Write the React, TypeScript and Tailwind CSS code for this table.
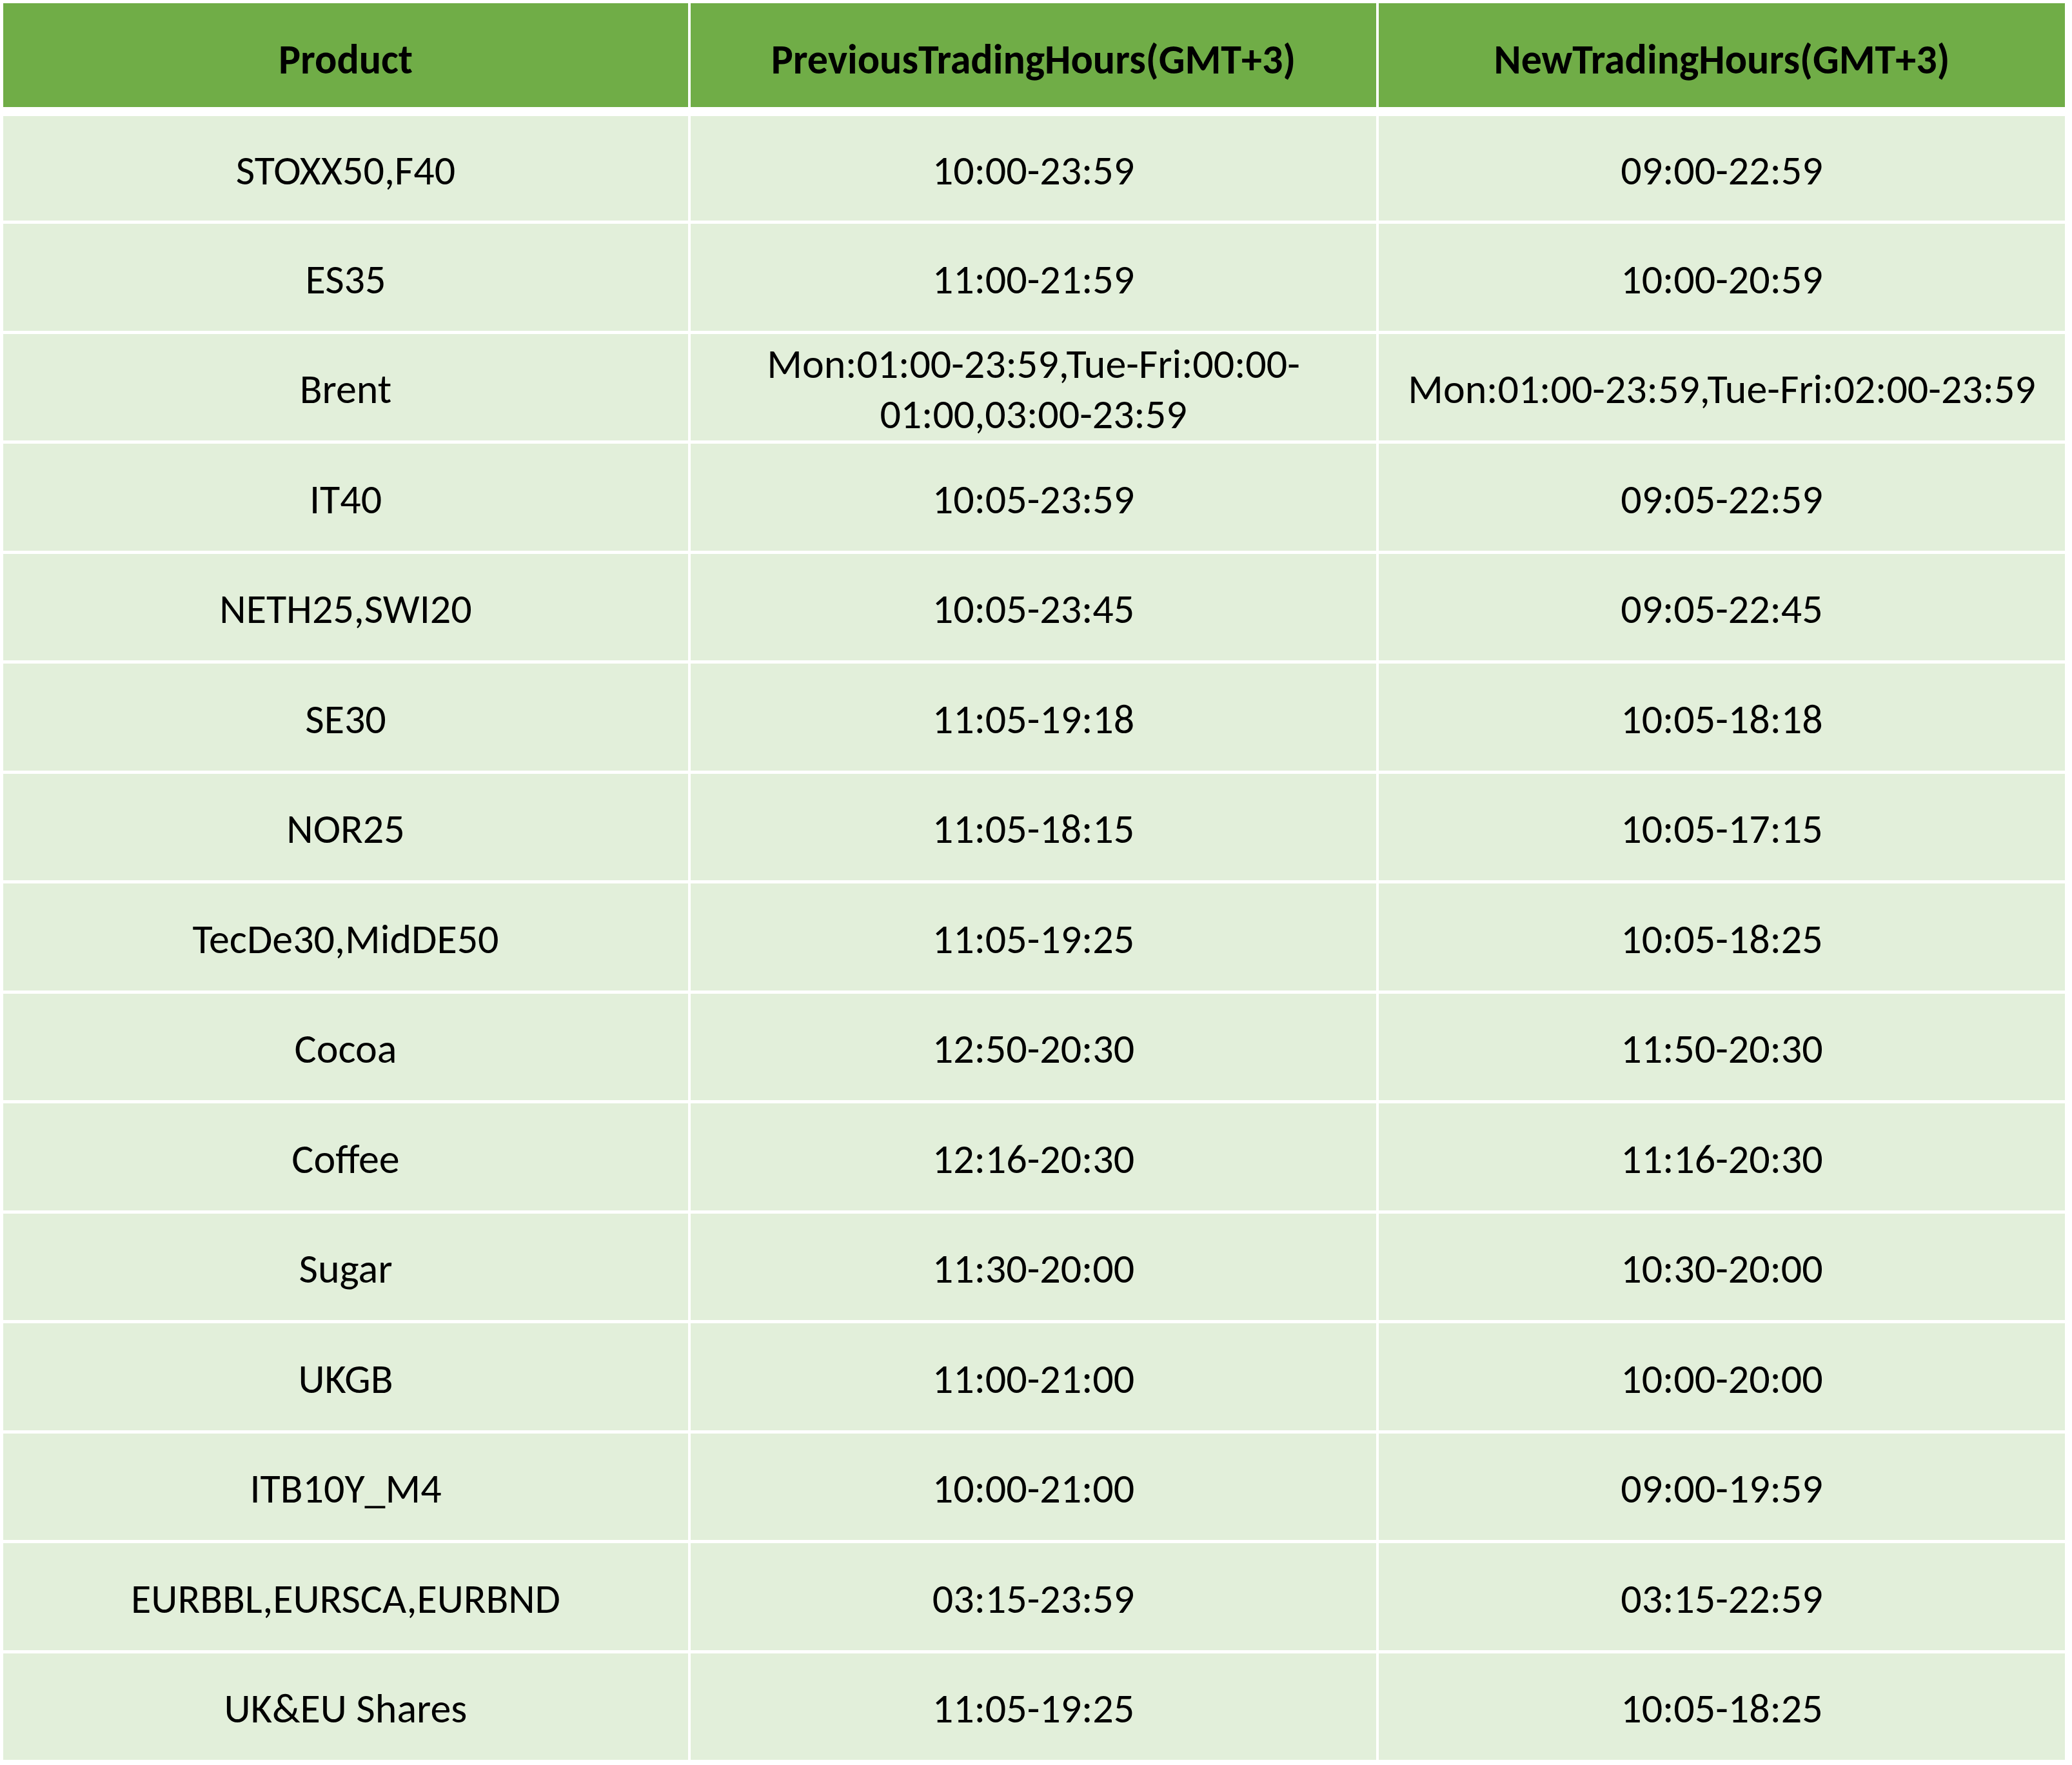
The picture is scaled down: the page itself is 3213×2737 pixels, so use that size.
const rows: [string, string, string][] = [
  ["STOXX50,F40", "10:00-23:59", "09:00-22:59"],
  ["ES35", "11:00-21:59", "10:00-20:59"],
  ["Brent", "Mon:01:00-23:59,Tue-Fri:00:00-01:00,03:00-23:59", "Mon:01:00-23:59,Tue-Fri:02:00-23:59"],
  ["IT40", "10:05-23:59", "09:05-22:59"],
  ["NETH25,SWI20", "10:05-23:45", "09:05-22:45"],
  ["SE30", "11:05-19:18", "10:05-18:18"],
  ["NOR25", "11:05-18:15", "10:05-17:15"],
  ["TecDe30,MidDE50", "11:05-19:25", "10:05-18:25"],
  ["Cocoa", "12:50-20:30", "11:50-20:30"],
  ["Coffee", "12:16-20:30", "11:16-20:30"],
  ["Sugar", "11:30-20:00", "10:30-20:00"],
  ["UKGB", "11:00-21:00", "10:00-20:00"],
  ["ITB10Y_M4", "10:00-21:00", "09:00-19:59"],
  ["EURBBL,EURSCA,EURBND", "03:15-23:59", "03:15-22:59"],
  ["UK&EU Shares", "11:05-19:25", "10:05-18:25"],
];

const headers = ["Product", "PreviousTradingHours(GMT+3)", "NewTradingHours(GMT+3)"];

export default function App() {
  return (
    <div className="bg-white w-[3213px] h-[2737px] pt-[5px] pl-[5px] font-['Carlito','Liberation_Sans_Narrow','Open_Sans',sans-serif] text-[64px] text-black">
      <div className="w-[3197px] flex flex-col">
        <div className="grid grid-cols-[1062px_1063px_1064px] gap-x-[4px] h-[161px] mb-[14px]">
          {headers.map((h) => (
            <div key={h} className="bg-[#70ad47] flex items-center justify-center font-bold pt-[12px]">
              {h}
            </div>
          ))}
        </div>
        <div className="flex flex-col gap-y-[5px]">
          {rows.map((r, i) => (
            <div
              key={r[0]}
              className={
                "grid grid-cols-[1062px_1063px_1064px] gap-x-[4px] " + (i === 0 ? "h-[162px]" : "h-[165.5px]")
              }
            >
              {r.map((c, j) => (
                <div
                  key={j}
                  className="bg-[#e2efda] flex items-center justify-center text-center leading-[78px] px-[40px] pt-[6px]"
                >
                  {c}
                </div>
              ))}
            </div>
          ))}
        </div>
      </div>
    </div>
  );
}
